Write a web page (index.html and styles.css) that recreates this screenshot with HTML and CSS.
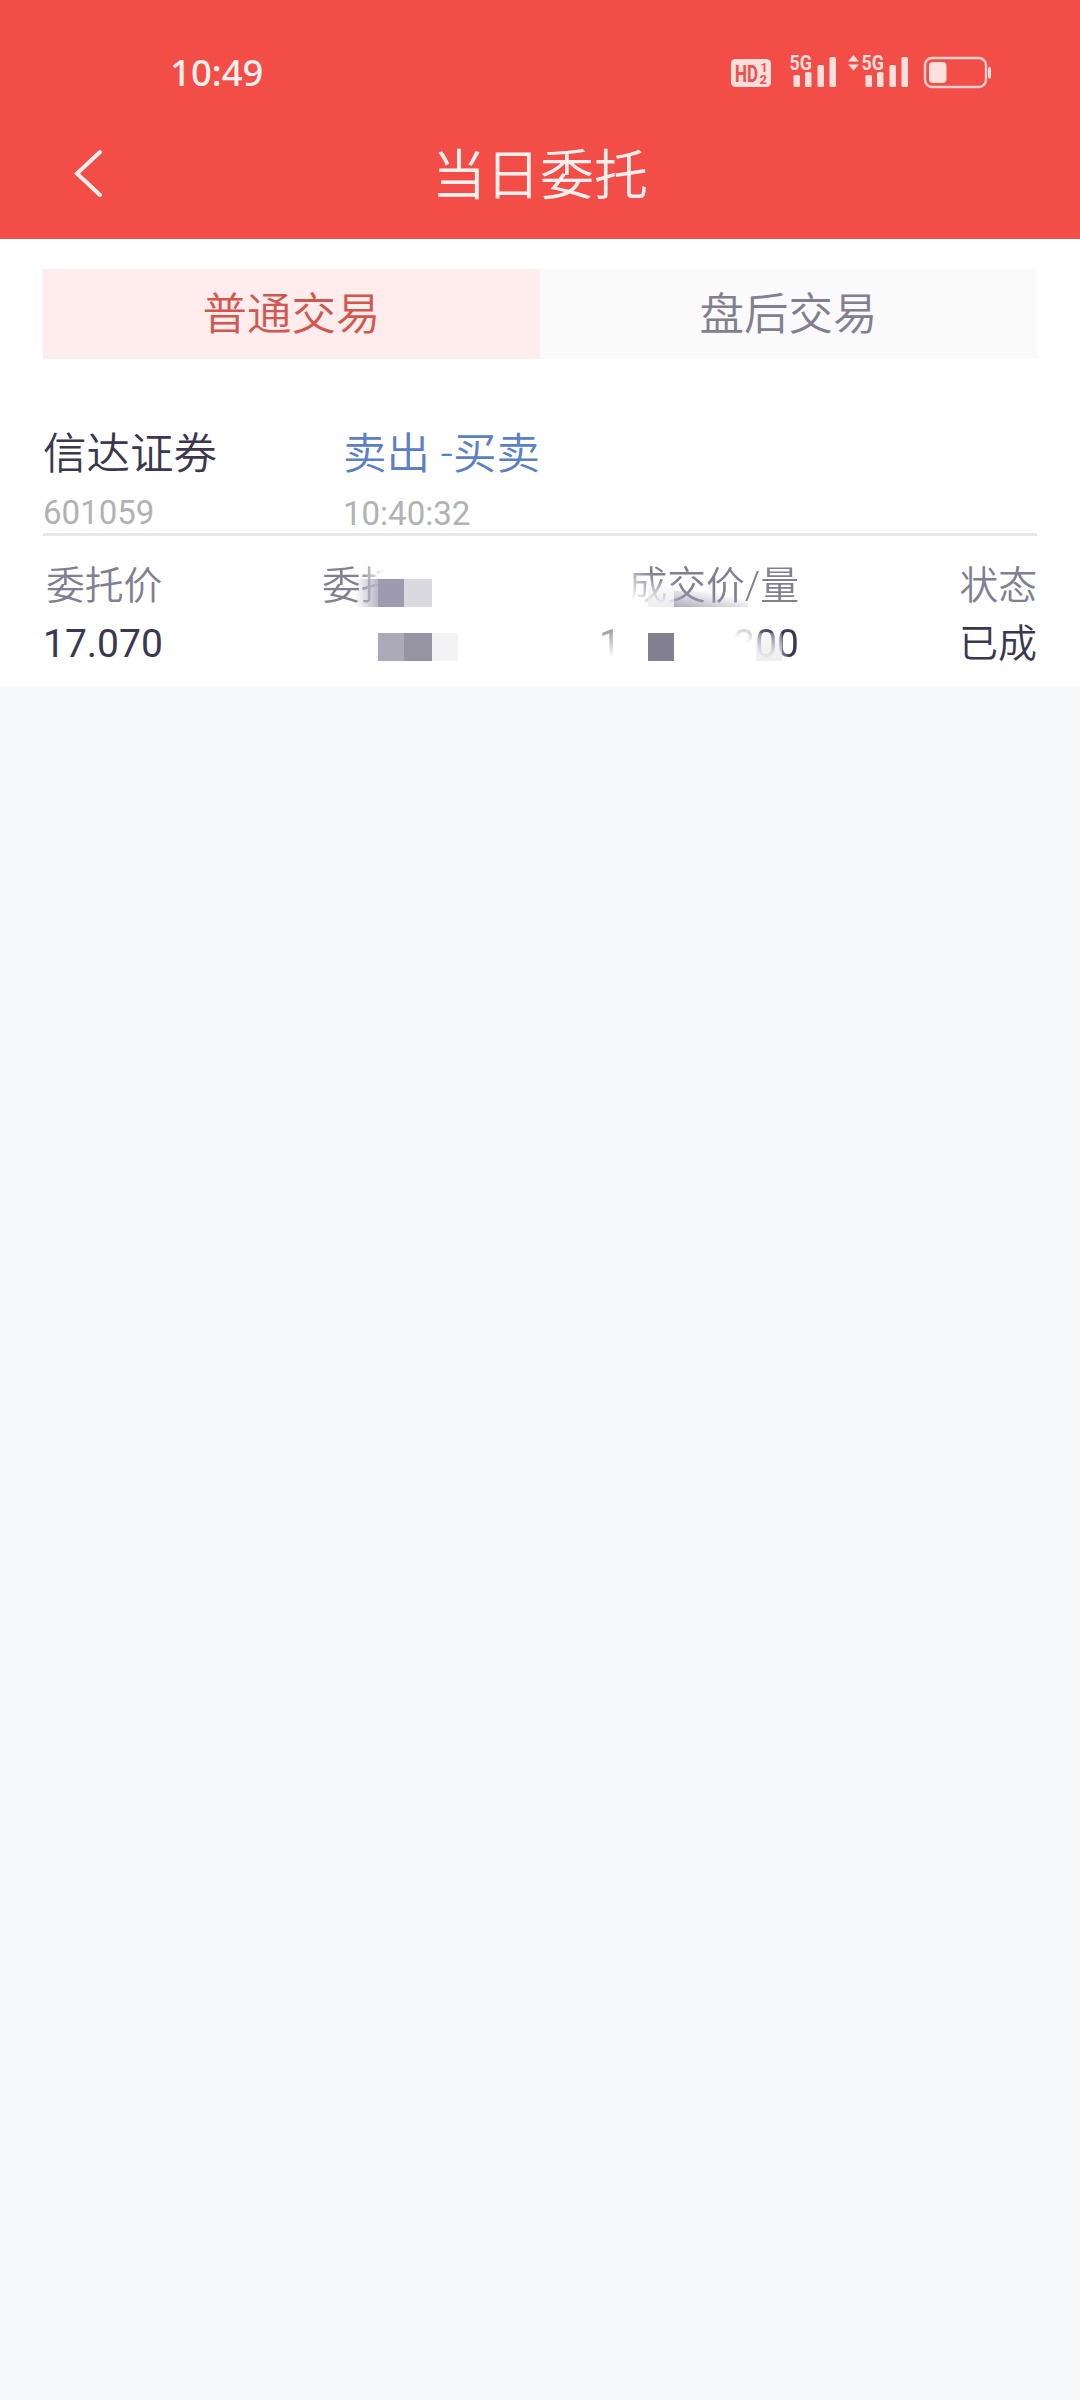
FILE: index.html
```html
<!DOCTYPE html>
<html lang="zh-CN">
<head>
<meta charset="utf-8">
<title>当日委托</title>
<link rel="stylesheet" href="styles.css">
</head>
<body>
<header class="header">
  <div class="status">
    <span class="clock">10:49</span>
    <svg class="status-icons" width="262" height="46" viewBox="730 45 262 46">
      <rect x="731" y="59" width="40" height="28" rx="4.5"/>
      <g class="badge-text">
        <text x="735" y="81.500" font-size="23" textLength="23" lengthAdjust="spacingAndGlyphs">HD</text>
        <text x="760.500" y="72" font-size="12.500">1</text>
        <text x="759.500" y="84" font-size="13">2</text>
      </g>
      <g id="signal">
        <text class="net" x="789.5" y="70" font-size="21" textLength="22.500" lengthAdjust="spacingAndGlyphs">5G</text>
        <rect x="793.5" y="75" width="6.5" height="12" rx="1.5"/>
        <rect x="805" y="72" width="6.5" height="15" rx="1.5"/>
        <rect x="817.5" y="65" width="6.5" height="22" rx="1.5"/>
        <rect x="829.5" y="57" width="6.5" height="30" rx="1.5"/>
      </g>
      <use href="#signal" x="72"/>
      <path d="M848 61.500L853.500 55L859 61.500ZM848 64.500H859L853.500 70.500Z"/>
      <rect class="outline" x="925" y="58" width="61" height="29" rx="7"/>
      <rect x="929" y="62" width="17.500" height="21" rx="4"/>
      <rect x="988" y="67" width="3" height="11.500" rx="1.500"/>
    </svg>
  </div>
  <nav class="nav">
    <svg class="back" width="30" height="48" viewBox="0 0 30 48"><path d="M26 3L3 24.500L26 46"/></svg>
    <h1 class="title">当日委托</h1>
  </nav>
</header>
<main class="panel">
  <div class="tabs">
    <div class="tab active">普通交易</div>
    <div class="tab">盘后交易</div>
  </div>
  <section class="order">
    <div class="summary">
      <div class="name">信达证券</div>
      <div class="side">卖出 -买卖</div>
      <div class="code">601059</div>
      <div class="code time">10:40:32</div>
    </div>
    <div class="details">
      <div class="col price"><span class="label">委托价</span><span class="value">17.070</span></div>
      <div class="col amount">
        <span class="label faded">委托</span>
        <i class="mosaic m1"></i><i class="mosaic m2"></i>
      </div>
      <div class="col deal">
        <span class="label deal-label">成交价/量</span>
        <span class="value split"><span class="lead">1</span><span class="tail"><span class="ghost">3</span><span class="half">0</span><span class="last">0</span></span></span>
        <i class="mosaic m3"></i><i class="mosaic m4"></i><i class="mosaic m5"></i><i class="mosaic m6"></i>
      </div>
      <div class="col state"><span class="label">状态</span><span class="value">已成</span></div>
    </div>
  </section>
</main>
</body>
</html>
```
FILE: styles.css
```css
* { box-sizing: border-box; }
body {
  margin: 0;
  min-height: 2400px;
  background: #f6f8fa;
  font-family: Roboto, "Noto Sans CJK SC", sans-serif;
  color: #3b3750;
}
.header { height: 239px; background: #f24d46; color: #fff0ee; }
.status {
  display: flex;
  justify-content: space-between;
  height: 129px;
  padding: 45px 88px 0 170px;
}
.clock { padding-top: 9px; font: 500 36.5px/36px "Noto Sans", sans-serif; }
.status-icons { fill: #ffdfdc; }
.badge-text { fill: #f24d46; font-family: Roboto, sans-serif; font-weight: 700; }
.net { font-family: Roboto, sans-serif; font-weight: 700; }
.outline { fill: none; stroke: #ffd0cc; stroke-width: 2.4; }
.nav { display: grid; grid-template-columns: 200px 1fr 200px; height: 88px; align-items: center; }
.back { margin-left: 74px; fill: none; stroke: #fff0ee; stroke-width: 4; stroke-linecap: round; }
.title { margin: 0; padding-top: 8px; font-size: 54px; line-height: 80px; font-weight: 350; text-align: center; }
.panel { height: 448px; padding: 30px 43px 0; background: #fff; }
.tabs { display: grid; grid-template-columns: 1fr 1fr; height: 90px; }
.tab { background: #fafafb; color: #82808e; font-size: 44.5px; line-height: 93px; height: 90px; text-align: center; font-weight: 350; }
.tab.active { background: #ffecec; color: #d3574f; }
.summary {
  display: grid;
  grid-template-columns: 300px 1fr;
  grid-template-rows: 62px 51px;
  height: 177px;
  padding-top: 65px;
  border-bottom: 3px solid #e7e7e7;
}
.name, .side { font-size: 43.500px; line-height: 62px; font-weight: 350; white-space: nowrap; }
.side { color: #5b80c7; }
.code { font-size: 33px; line-height: 54px; color: #b1b2b3; }
.time { padding-top: 1px; }
.details {
  display: grid;
  grid-template-columns: 279px 277px 200px 1fr;
  height: 151px;
  padding-top: 21px;
}
.col { display: flex; flex-direction: column; position: relative; font-size: 38.800px; line-height: 57px; white-space: nowrap; }
.label { color: #817f91; font-weight: 350; }
.price .label { padding-left: 3px; }
.value { font-size: 39px; line-height: 60px; font-weight: 350; }
.price .value, .split { font-weight: 400; }
.faded { -webkit-mask-image: linear-gradient(90deg, #000 36px, transparent 62px); mask-image: linear-gradient(90deg, #000 36px, transparent 62px); }
.deal { text-align: right; }
.deal-label { -webkit-mask-image: linear-gradient(40deg, transparent 32px, #000 66px); mask-image: linear-gradient(40deg, transparent 32px, #000 66px); }
.split { display: flex; justify-content: space-between; }
.tail { display: flex; }
.lead, .ghost, .half, .last { color: transparent; -webkit-background-clip: text; background-clip: text; }
.lead { background-image: linear-gradient(170deg, #a5a3ad 32%, #fff 72%); }
.ghost { background-image: linear-gradient(200deg, #dad9de 32%, #fff 48%); }
.half { background-image: linear-gradient(205deg, #3b3750 25%, #dedde2 72%); }
.last { background-image: linear-gradient(245deg, #3b3750 55%, #a7a5b0 80%); }
.state { text-align: right; }
.mosaic { position: absolute; height: 28px; }
.m1 { left: 32px; top: 22px; width: 78px; background: linear-gradient(90deg, rgba(158,155,176,0), rgba(158,155,176,.7) 24px, #9e9bb0 24px 50px, #dad9e0 50px); }
.m2 { left: 56px; top: 76px; width: 80px; background: linear-gradient(90deg, #acaab8 26px, #9693a2 26px 54px, #f3f3f5 54px); }
.m3 { left: 49px; top: 22px; width: 26px; background: linear-gradient(rgba(237,237,240,0), #ededf0); }
.m4 { left: 75px; top: 34px; width: 74px; height: 16px; background: linear-gradient(13deg, rgba(165,162,182,.9), rgba(255,255,255,0) 75%); }
.m5 { left: 49px; top: 76px; width: 26px; background: #827f91; }
.m6 { left: 157px; top: 76px; width: 26px; background: linear-gradient(rgba(236,236,239,.3), rgba(236,236,239,.9)); }
```
